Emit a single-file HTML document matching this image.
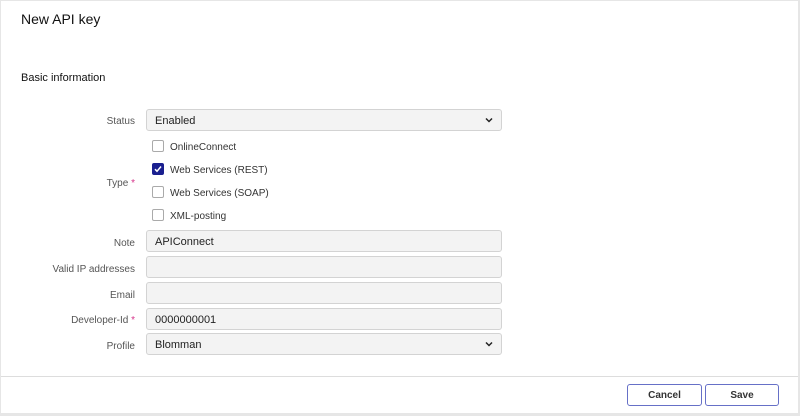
<!DOCTYPE html>
<html><head><style>
*{box-sizing:border-box;margin:0;padding:0}
body{width:800px;height:416px;background:#e6e6e6;font-family:"Liberation Sans",sans-serif;position:relative;overflow:hidden}
.panel{position:absolute;left:1px;top:1px;width:797px;height:412px;background:#fff}
.t{position:absolute;color:#111}
.lbl{position:absolute;right:665px;font-size:10px;color:#555;width:130px;text-align:right;margin-top:2px}
.in{position:absolute;left:146px;width:356px;height:22px;background:#f3f3f3;border:1px solid #d3d3d3;border-radius:3px;font-size:11px;color:#222;padding:5px 8px}
.chev{position:absolute;right:8px;top:6px}
.cb{position:absolute;left:152px;width:12px;height:12px;border:1px solid #aaa;border-radius:2px;background:#fff}
.cbl{position:absolute;left:170px;font-size:10px;color:#333;margin-top:1px}
.star{color:#d6338a}
.btn{position:absolute;top:384px;height:22px;border:1px solid #6670c7;border-radius:3px;font-size:10px;font-weight:bold;color:#333;text-align:center;line-height:22px;background:#fff}
</style></head><body>
<div class="panel"></div>
<div class="t" style="left:21px;top:11px;font-size:14px">New API key</div>
<div class="t" style="left:21px;top:72px;font-size:11px">Basic information</div>

<div class="lbl" style="top:114px">Status</div>
<div class="in" style="top:109px">Enabled<svg class="chev" width="8" height="8" viewBox="0 0 8 8"><path d="M1 2.5L4 5.5L7 2.5" stroke="#222" stroke-width="1.5" fill="none"/></svg></div>

<div class="cb" style="top:140px"></div><div class="cbl" style="top:141px">OnlineConnect</div>
<div class="cb" style="top:163px;background:#1a1f8f;border-color:#1a1f8f"><svg width="10" height="10" viewBox="0 0 10 10" style="position:absolute;left:0;top:0"><path d="M2 5.2L4 7.3L8 2.5" stroke="#fff" stroke-width="1.5" fill="none"/></svg></div><div class="cbl" style="top:164px">Web Services (REST)</div>
<div class="cb" style="top:186px"></div><div class="cbl" style="top:187px">Web Services (SOAP)</div>
<div class="cb" style="top:209px"></div><div class="cbl" style="top:210px">XML-posting</div>
<div class="lbl" style="top:176px">Type <span class="star">*</span></div>

<div class="lbl" style="top:236px">Note</div>
<div class="in" style="top:230px">APIConnect</div>
<div class="lbl" style="top:262px">Valid IP addresses</div>
<div class="in" style="top:256px"></div>
<div class="lbl" style="top:288px">Email</div>
<div class="in" style="top:282px"></div>
<div class="lbl" style="top:313px">Developer-Id <span class="star">*</span></div>
<div class="in" style="top:308px">0000000001</div>
<div class="lbl" style="top:339px">Profile</div>
<div class="in" style="top:333px">Blomman<svg class="chev" width="8" height="8" viewBox="0 0 8 8"><path d="M1 2.5L4 5.5L7 2.5" stroke="#222" stroke-width="1.5" fill="none"/></svg></div>

<div style="position:absolute;left:1px;top:376px;width:797px;height:1px;background:#ddd"></div>
<div class="btn" style="left:627px;width:75px">Cancel</div>
<div class="btn" style="left:705px;width:74px">Save</div>
</body></html>
